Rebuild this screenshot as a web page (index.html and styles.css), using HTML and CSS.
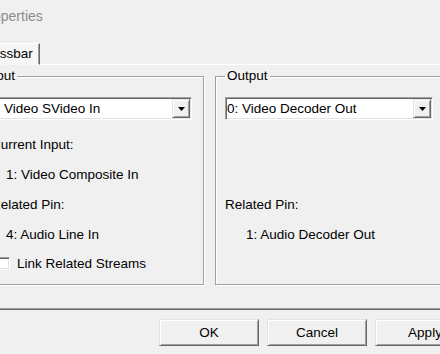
FILE: index.html
```html
<!DOCTYPE html>
<html>
<head>
<meta charset="utf-8">
<title>Properties</title>
<link rel="stylesheet" href="styles.css">
</head>
<body>
<div class="window">
  <div class="titlebar">Properties</div>
  <div class="tabstrip"><div class="tab">Crossbar</div></div>
  <div class="panel">
    <fieldset class="group group-input">
      <legend>Input</legend>
      <div class="combo combo-input">
        <span class="combo-text">2: Video SVideo In</span>
        <span class="combo-btn"><svg width="7" height="4" viewBox="0 0 7 4"><path d="M0 0H7L3.5 4Z" fill="#000"/></svg></span>
      </div>
      <div class="row lbl first">Current Input:</div>
      <div class="row val">1: Video Composite In</div>
      <div class="row lbl">Related Pin:</div>
      <div class="row val">4: Audio Line In</div>
      <label class="check-row"><span class="checkbox"></span>Link Related Streams</label>
    </fieldset>
    <fieldset class="group group-output">
      <legend>Output</legend>
      <div class="combo combo-output">
        <span class="combo-text">0: Video Decoder Out</span>
        <span class="combo-btn"><svg width="7" height="4" viewBox="0 0 7 4"><path d="M0 0H7L3.5 4Z" fill="#000"/></svg></span>
      </div>
      <div class="spacer"></div>
      <div class="row lbl">Related Pin:</div>
      <div class="row val">1: Audio Decoder Out</div>
    </fieldset>
  </div>
  <div class="buttons">
    <button class="btn">OK</button>
    <button class="btn">Cancel</button>
    <button class="btn">Apply</button>
  </div>
</div>
</body>
</html>
```
FILE: styles.css
```css
html, body {
  margin: 0;
  background: #f0f0f0;
  overflow: hidden;
}
body {
  font: 13.5px "Liberation Sans", Arial, sans-serif;
  color: #000;
  width: 440px;
  height: 354px;
}
.window {
  width: 522px;
  margin-left: -40px;
}
.titlebar {
  height: 31px;
  box-sizing: border-box;
  padding: 3px 0 0 19px;
  line-height: 27px;
  font-size: 14px;
  color: #8c8c8c;
}
.tabstrip {
  display: flex;
  margin-top: 12px;
  padding-left: 10px;
}
.tab {
  position: relative;
  z-index: 1;
  height: 22px;
  box-sizing: border-box;
  padding: 0 6px 0 7px;
  line-height: 20px;
  border: 1px solid;
  border-color: #fff #696969 transparent #fff;
  box-shadow: inset -1px 0 #a0a0a0;
  background: #f6f6f6;
  margin-bottom: -1px;
}
.panel {
  margin-left: 8px;
  width: 507px;
  height: 246px;
  box-sizing: border-box;
  border: 1px solid;
  border-color: #fff #696969 #696969 #fff;
  box-shadow: inset -1px -1px #a0a0a0;
  padding: 3px 4px 0;
  display: grid;
  grid-template-columns: 231px 229px;
  column-gap: 11px;
  align-items: start;
}
.group {
  margin: 0;
  padding: 13px 9px 0;
  min-width: 0;
  height: 217px;
  box-sizing: border-box;
  border: 1px solid #a0a0a0;
  box-shadow: 1px 1px 0 #fff, inset 1px 1px 0 #fff;
}
.group legend {
  padding: 0 2px;
  line-height: 16px;
}
.combo {
  display: flex;
  height: 23px;
  box-sizing: border-box;
  border: 1px solid;
  border-color: #a0a0a0 #fff #fff #a0a0a0;
  box-shadow: inset 1px 1px #696969, inset -1px -1px #e3e3e3;
  background: #fff;
  padding: 1px;
}
.combo-input {
  width: 205px;
  margin-left: 4px;
}
.combo-output {
  width: 208px;
}
.combo-text {
  flex: 1;
  line-height: 19px;
  white-space: nowrap;
  overflow: hidden;
}
.combo-btn {
  width: 18px;
  box-sizing: border-box;
  border: 1px solid;
  border-color: #e3e3e3 #696969 #696969 #e3e3e3;
  box-shadow: inset 1px 1px #fff, inset -1px -1px #a0a0a0;
  background: #f0f0f0;
  display: flex;
  align-items: center;
  justify-content: center;
}
.combo-btn svg {
  display: block;
}
.row {
  height: 30px;
  line-height: 30px;
  white-space: nowrap;
}
.first {
  margin-top: 10px;
}
.spacer {
  height: 70px;
}
.group-input .lbl {
  padding-left: 8px;
}
.group-input .val {
  padding-left: 23px;
}
.group-output .val {
  padding-left: 21px;
}
.check-row {
  display: flex;
  align-items: center;
  height: 26px;
  padding-left: 14px;
  white-space: nowrap;
}
.checkbox {
  width: 13px;
  height: 13px;
  box-sizing: border-box;
  margin-right: 7px;
  background: #fff;
  border: 1px solid;
  border-color: #a0a0a0 #fff #fff #a0a0a0;
  box-shadow: inset 1px 1px #696969, inset -1px -1px #e3e3e3;
}
.buttons {
  display: flex;
  justify-content: flex-end;
  gap: 8px;
  padding: 9px 7px 0 0;
}
.btn {
  width: 100px;
  height: 27px;
  box-sizing: border-box;
  padding: 0;
  font: inherit;
  color: #000;
  background: #f0f0f0;
  border: 1px solid;
  border-color: #e3e3e3 #696969 #696969 #e3e3e3;
  box-shadow: inset 1px 1px #fff, inset -1px -1px #a0a0a0;
}
```
